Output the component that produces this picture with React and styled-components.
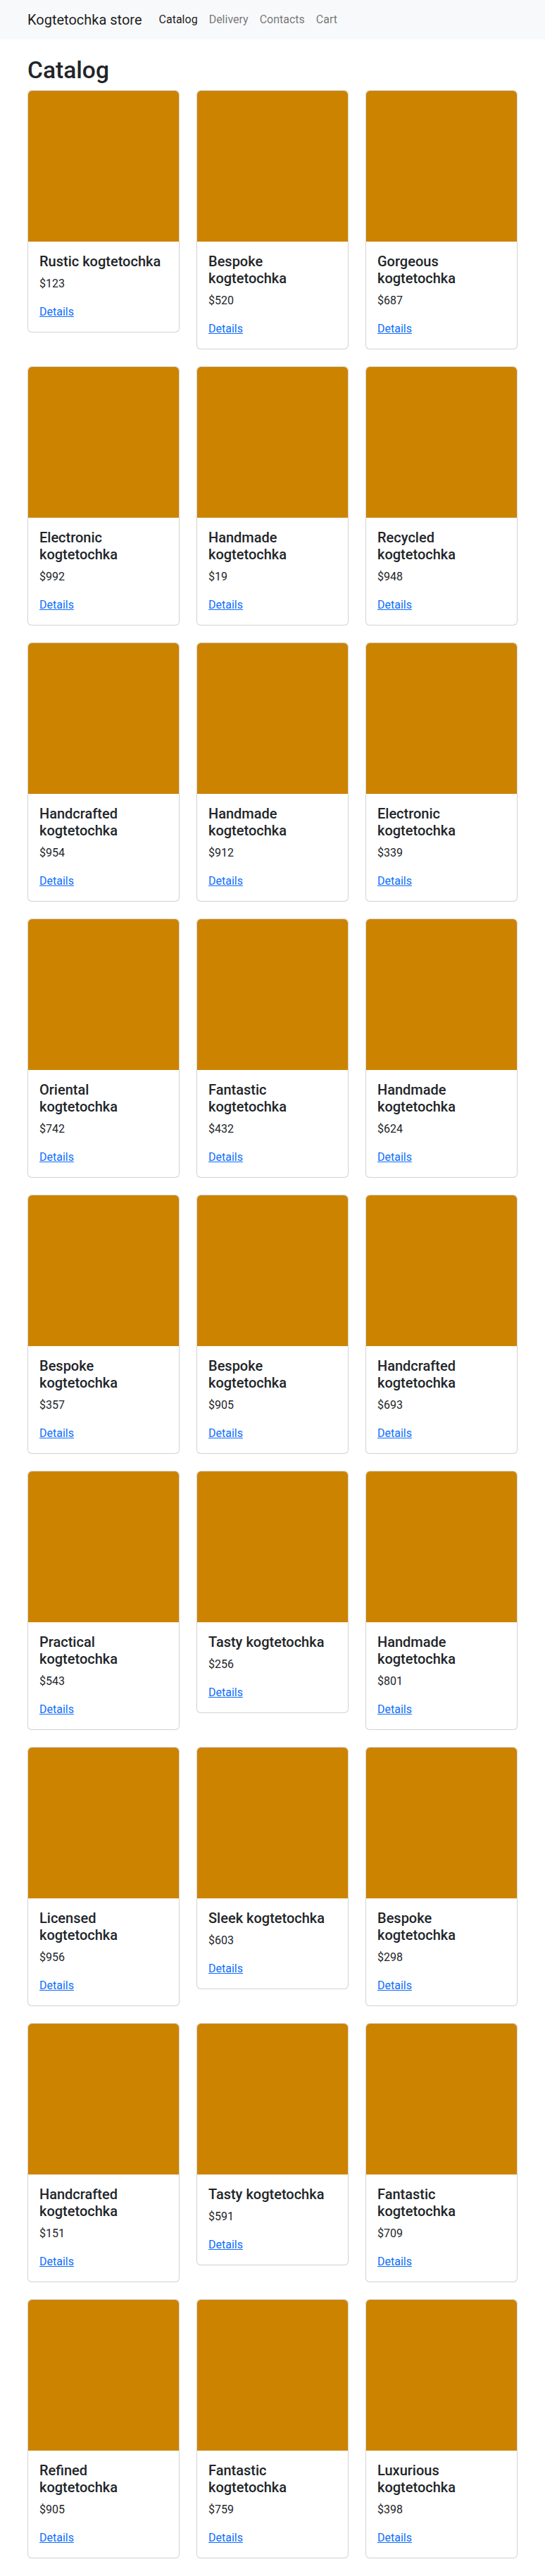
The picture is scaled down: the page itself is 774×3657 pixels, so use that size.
import React from "react";
import styled, { createGlobalStyle } from "styled-components";

const products = [
  { name: "Rustic", price: 123 },
  { name: "Bespoke", price: 520 },
  { name: "Gorgeous", price: 687 },
  { name: "Electronic", price: 992 },
  { name: "Handmade", price: 19 },
  { name: "Recycled", price: 948 },
  { name: "Handcrafted", price: 954 },
  { name: "Handmade", price: 912 },
  { name: "Electronic", price: 339 },
  { name: "Oriental", price: 742 },
  { name: "Fantastic", price: 432 },
  { name: "Handmade", price: 624 },
  { name: "Bespoke", price: 357 },
  { name: "Bespoke", price: 905 },
  { name: "Handcrafted", price: 693 },
  { name: "Practical", price: 543 },
  { name: "Tasty", price: 256 },
  { name: "Handmade", price: 801 },
  { name: "Licensed", price: 956 },
  { name: "Sleek", price: 603 },
  { name: "Bespoke", price: 298 },
  { name: "Handcrafted", price: 151 },
  { name: "Tasty", price: 591 },
  { name: "Fantastic", price: 709 },
  { name: "Refined", price: 905 },
  { name: "Fantastic", price: 759 },
  { name: "Luxurious", price: 398 }
];

const navItems = ["Catalog", "Delivery", "Contacts", "Cart"];

const GlobalStyle = createGlobalStyle`
  * {
    box-sizing: border-box;
  }
  body {
    margin: 0;
    background: #fff;
    color: #212529;
    font-family: "Segoe UI", Roboto, "Liberation Sans", sans-serif;
    font-size: 16px;
    line-height: 1.5;
  }
`;

const Navbar = styled.nav`
  background: #f8f9fa;
  padding: 8px 0;
`;

const Container = styled.div`
  max-width: 720px;
  margin: 0 auto;
  padding: 0 12px;
`;

const NavInner = styled(Container)`
  display: flex;
  align-items: center;
`;

const Brand = styled.a`
  color: rgba(0, 0, 0, 0.9);
  font-size: 20px;
  line-height: 30px;
  padding: 5px 0;
  margin-right: 16px;
  text-decoration: none;
`;

const NavList = styled.div`
  display: flex;
`;

const NavLink = styled.a`
  padding: 8px;
  line-height: 24px;
  text-decoration: none;
  color: ${props => (props.active ? "rgba(0, 0, 0, 0.9)" : "rgba(0, 0, 0, 0.55)")};
`;

const Main = styled(Container)`
  padding-top: 24px;
  padding-bottom: 24px;
`;

const Title = styled.h1`
  margin: 0 0 8px;
  font-size: 33.6px;
  font-weight: 500;
  line-height: 1.2;
`;

const Grid = styled.div`
  display: grid;
  grid-template-columns: repeat(3, 1fr);
  gap: 24px;
  align-items: start;
`;

const Card = styled.div`
  border: 1px solid rgba(0, 0, 0, 0.175);
  border-radius: 6px;
  background: #fff;
  overflow: hidden;
`;

const Picture = styled.div`
  aspect-ratio: 1 / 1;
  background: #cc8400;
  border-radius: 5px 5px 0 0;
`;

const CardBody = styled.div`
  padding: 16px;
`;

const CardTitle = styled.h5`
  margin: 0 0 8px;
  font-size: 20px;
  font-weight: 500;
  line-height: 1.2;
`;

const CardText = styled.p`
  margin: 0 0 16px;
  &:last-child {
    margin-bottom: 0;
  }
`;

const DetailsLink = styled.a`
  color: #0d6efd;
  text-decoration: underline;
`;

export default function App() {
  return (
    <>
      <GlobalStyle />
      <Navbar>
        <NavInner>
          <Brand href="#">Kogtetochka store</Brand>
          <NavList>
            {navItems.map((item, i) => (
              <NavLink key={item} href="#" active={i === 0 ? 1 : 0}>
                {item}
              </NavLink>
            ))}
          </NavList>
        </NavInner>
      </Navbar>
      <Main>
        <Title>Catalog</Title>
        <Grid>
          {products.map((p, i) => (
            <Card key={i}>
              <Picture />
              <CardBody>
                <CardTitle>{p.name} kogtetochka</CardTitle>
                <CardText>${p.price}</CardText>
                <CardText>
                  <DetailsLink href="#">Details</DetailsLink>
                </CardText>
              </CardBody>
            </Card>
          ))}
        </Grid>
      </Main>
    </>
  );
}
